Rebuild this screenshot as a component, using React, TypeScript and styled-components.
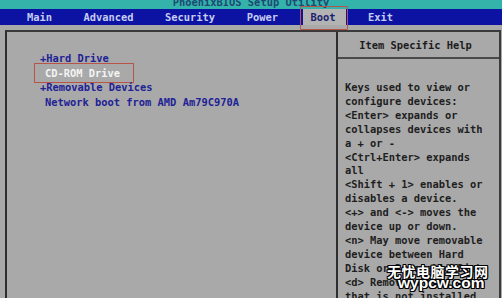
import React from "react";
import styled, { createGlobalStyle } from "styled-components";

const GlobalStyle = createGlobalStyle`
  html, body { margin: 0; padding: 0; background: #a9a9a9; }
  body { width: 502px; height: 298px; overflow: hidden; }
`;

const MONO = `"DejaVu Sans Mono", "Liberation Mono", monospace`;

const Screen = styled.div`
  position: relative;
  width: 502px;
  height: 298px;
  overflow: hidden;
  display: flex;
  flex-direction: column;
  background: #a9a9a9;
  font-family: ${MONO};
  font-size: 10.4px;
  font-weight: bold;
`;

const TitleBar = styled.div`
  height: 9px;
  background: #34b3ab;
  display: flex;
  justify-content: center;
  overflow: hidden;
  flex-shrink: 0;
`;

const TitleText = styled.span`
  color: #1d4a72;
  line-height: 9px;
  margin-top: -2px;
  white-space: pre;
`;

const MenuBar = styled.div`
  height: 16px;
  background: #0c12a2;
  display: flex;
  align-items: stretch;
  gap: 17.5px;
  padding-left: 20px;
  flex-shrink: 0;
`;

const Tab = styled.div<{ $active?: boolean }>`
  position: relative;
  display: flex;
  align-items: center;
  padding: ${(p) => (p.$active ? "0 11px 0 7px" : "0 7px")};
  margin-left: ${(p) => (p.$active ? "1px" : "0")};
  margin-right: ${(p) => (p.$active ? "-3px" : "0")};
  background: ${(p) => (p.$active ? "#b3b3b3" : "transparent")};
  color: ${(p) => (p.$active ? "#1b1f6e" : "#c4cdf2")};
  white-space: pre;
  &::after {
    content: "";
    display: ${(p) => (p.$active ? "block" : "none")};
    position: absolute;
    left: -3px;
    right: -2px;
    top: -3px;
    bottom: -5px;
    border: 1px solid #b9544a;
    border-radius: 1px;
  }
`;

const Body = styled.div`
  flex: 1;
  display: flex;
  padding: 5px 1px 0 5px;
  min-height: 0;
`;

const Frame = styled.div`
  flex: 1;
  display: flex;
  border-top: 2px solid #3a3a3a;
  border-left: 2px solid #2e2e2e;
  border-right: 2px solid #3a3a3a;
  min-height: 0;
`;

const LeftPanel = styled.div`
  width: 331px;
  flex-shrink: 0;
  border-right: 2px solid #2e2e2e;
  padding: 19px 0 0 33px;
  box-sizing: border-box;
  display: flex;
  flex-direction: column;
  align-items: flex-start;
`;

const BootItem = styled.div<{ $selected?: boolean; $indent?: boolean }>`
  position: relative;
  line-height: 14.7px;
  white-space: pre;
  color: ${(p) => (p.$selected ? "#f4f4f4" : "#1e2296")};
  padding-left: ${(p) => (p.$indent ? "5px" : "0")};
  &::after {
    content: "";
    display: ${(p) => (p.$selected ? "block" : "none")};
    position: absolute;
    left: -6px;
    right: -14px;
    top: -3px;
    bottom: -3px;
    border: 1px solid #b9544a;
  }
`;

const HelpPanel = styled.div`
  flex: 1;
  display: flex;
  flex-direction: column;
  min-width: 0;
`;

const HelpHeader = styled.div`
  height: 25px;
  display: flex;
  align-items: center;
  justify-content: center;
  padding-right: 6px;
  border-bottom: 2px solid #4a4a4a;
  color: #1c1c1c;
  flex-shrink: 0;
`;

const HelpBody = styled.div`
  padding: 22px 0 0 7px;
  color: #1e1e1e;
`;

const HelpLine = styled.div`
  line-height: 13.9px;
  white-space: pre;
`;

const Watermark = styled.div`
  position: absolute;
  left: 387px;
  top: 263px;
  display: flex;
  flex-direction: column;
  align-items: flex-start;
  color: #ffffff;
  text-shadow: 1px 0 0 #000, -1px 0 0 #000, 0 1px 0 #000, 0 -1px 0 #000,
    1px 1px 0 #000, -1px -1px 0 #000, 1px -1px 0 #000, -1px 1px 0 #000;
`;

const WatermarkCn = styled.div`
  font-family: "Noto Sans CJK SC", sans-serif;
  font-weight: bold;
  font-size: 14px;
  line-height: 16px;
  letter-spacing: 0.5px;
`;

const WatermarkEn = styled.div`
  font-family: "Liberation Sans", Arial, sans-serif;
  font-weight: bold;
  font-size: 15.5px;
  line-height: 14px;
  margin-left: 11px;
  margin-top: -3px;
`;

const tabs = ["Main", "Advanced", "Security", "Power", "Boot", "Exit"];

const items: { label: string; selected?: boolean; indent?: boolean }[] = [
  { label: "+Hard Drive" },
  { label: "CD-ROM Drive", selected: true, indent: true },
  { label: "+Removable Devices" },
  { label: "Network boot from AMD Am79C970A", indent: true },
];

const helpLines = [
  "Keys used to view or",
  "configure devices:",
  "<Enter> expands or",
  "collapses devices with",
  "a + or -",
  "<Ctrl+Enter> expands",
  "all",
  "<Shift + 1> enables or",
  "disables a device.",
  "<+> and <-> moves the",
  "device up or down.",
  "<n> May move removable",
  "device between Hard",
  "Disk or Removable Disk",
  "<d> Remove a device",
  "that is not installed.",
];

export default function App() {
  return (
    <>
      <GlobalStyle />
      <Screen>
        <TitleBar>
          <TitleText>PhoenixBIOS Setup Utility</TitleText>
        </TitleBar>
        <MenuBar>
          {tabs.map((t) => (
            <Tab key={t} $active={t === "Boot"}>
              {t}
            </Tab>
          ))}
        </MenuBar>
        <Body>
          <Frame>
            <LeftPanel>
              {items.map((it) => (
                <BootItem key={it.label} $selected={it.selected} $indent={it.indent}>
                  {it.label}
                </BootItem>
              ))}
            </LeftPanel>
            <HelpPanel>
              <HelpHeader>Item Specific Help</HelpHeader>
              <HelpBody>
                {helpLines.map((l, i) => (
                  <HelpLine key={i}>{l}</HelpLine>
                ))}
              </HelpBody>
            </HelpPanel>
          </Frame>
        </Body>
        <Watermark>
          <WatermarkCn>无忧电脑学习网</WatermarkCn>
          <WatermarkEn>wypcw.com</WatermarkEn>
        </Watermark>
      </Screen>
    </>
  );
}
